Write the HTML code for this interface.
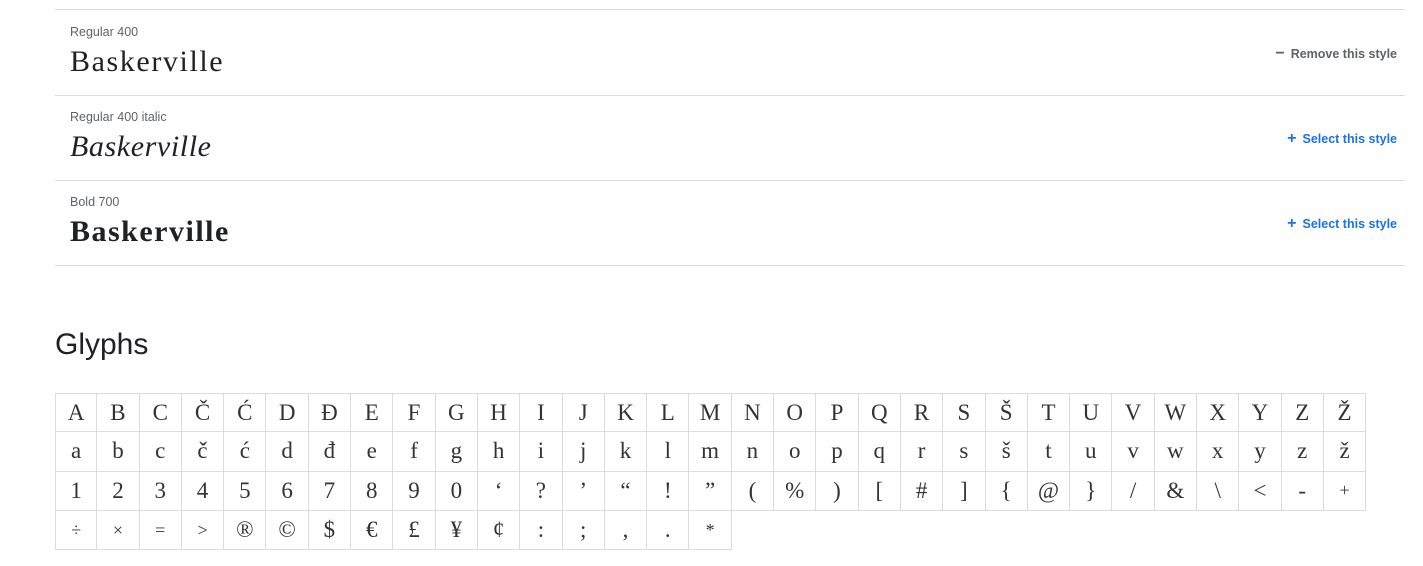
<!DOCTYPE html>
<html><head><meta charset="utf-8"><style>
body{margin:0;width:1423px;height:566px;background:#fff;position:relative;overflow:hidden;font-family:"Liberation Sans",Arial,sans-serif}
.row{position:absolute;left:55px;width:1350px;height:85px;border-bottom:1px solid #dcdcdc}
.lbl{position:absolute;left:15px;top:15px;font-size:12.5px;color:#5f6368}
.nm{position:absolute;left:15px;top:35px;font-family:"Liberation Serif",serif;font-size:30px;color:#202124;letter-spacing:1.6px}
.act{position:absolute;right:8px;top:35px;font-size:12.5px;font-weight:bold}
.act b{font-size:16px;margin-right:6px;font-weight:bold}
h2{position:absolute;left:55px;top:328px;margin:0;font-weight:normal;font-size:30px;color:#202124}
.g{position:absolute;left:55px;top:393px;display:grid;grid-template-columns:repeat(31,42.3px);grid-auto-rows:39.3px}
.g span{box-sizing:border-box;border-right:1px solid #dcdcdc;border-bottom:1px solid #dcdcdc;display:flex;align-items:center;justify-content:center;font-family:"Liberation Serif",serif;font-size:23px;color:#333}
.g span:nth-child(-n+31){border-top:1px solid #dcdcdc}
.g span:nth-child(31n+1){border-left:1px solid #dcdcdc}
.g span.s{font-size:18px}
</style></head><body>
<div class="row" style="top:9px;border-top:1px solid #dcdcdc"><div class="lbl">Regular 400</div><div class="nm">Baskerville</div><div class="act" style="color:#5f6368"><b>−</b>Remove this style</div></div>
<div class="row" style="top:95px"><div class="lbl">Regular 400 italic</div><div class="nm" style="font-style:italic;letter-spacing:0.6px">Baskerville</div><div class="act" style="color:#1a73e8"><b>+</b>Select this style</div></div>
<div class="row" style="top:180px"><div class="lbl">Bold 700</div><div class="nm" style="font-weight:bold;letter-spacing:1.5px">Baskerville</div><div class="act" style="color:#1a73e8"><b>+</b>Select this style</div></div>
<h2>Glyphs</h2>
<div class="g">
<span>A</span><span>B</span><span>C</span><span>Č</span><span>Ć</span><span>D</span><span>Đ</span><span>E</span><span>F</span><span>G</span><span>H</span><span>I</span><span>J</span><span>K</span><span>L</span><span>M</span><span>N</span><span>O</span><span>P</span><span>Q</span><span>R</span><span>S</span><span>Š</span><span>T</span><span>U</span><span>V</span><span>W</span><span>X</span><span>Y</span><span>Z</span><span>Ž</span>
<span>a</span><span>b</span><span>c</span><span>č</span><span>ć</span><span>d</span><span>đ</span><span>e</span><span>f</span><span>g</span><span>h</span><span>i</span><span>j</span><span>k</span><span>l</span><span>m</span><span>n</span><span>o</span><span>p</span><span>q</span><span>r</span><span>s</span><span>š</span><span>t</span><span>u</span><span>v</span><span>w</span><span>x</span><span>y</span><span>z</span><span>ž</span>
<span>1</span><span>2</span><span>3</span><span>4</span><span>5</span><span>6</span><span>7</span><span>8</span><span>9</span><span>0</span><span>‘</span><span>?</span><span>’</span><span>“</span><span>!</span><span>”</span><span>(</span><span>%</span><span>)</span><span>[</span><span>#</span><span>]</span><span>{</span><span>@</span><span>}</span><span>/</span><span>&amp;</span><span>\</span><span>&lt;</span><span>-</span><span class="s">+</span>
<span class="s">÷</span><span class="s">×</span><span class="s">=</span><span class="s">&gt;</span><span>®</span><span>©</span><span>$</span><span>€</span><span>£</span><span>¥</span><span>¢</span><span>:</span><span>;</span><span>,</span><span>.</span><span class="s">*</span>
</div>
</body></html>
